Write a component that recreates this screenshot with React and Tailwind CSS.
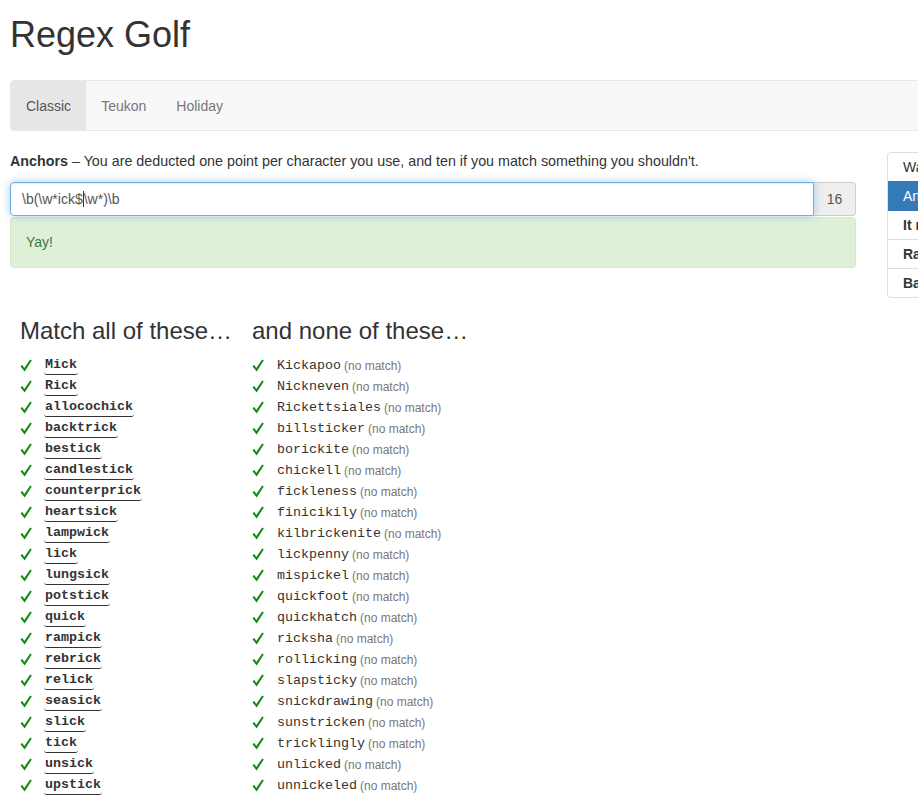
import React from "react";

const matches = ["Mick","Rick","allocochick","backtrick","bestick","candlestick","counterprick","heartsick","lampwick","lick","lungsick","potstick","quick","rampick","rebrick","relick","seasick","slick","tick","unsick","upstick"];
const nons = ["Kickapoo","Nickneven","Rickettsiales","billsticker","borickite","chickell","fickleness","finicikily","kilbrickenite","lickpenny","mispickel","quickfoot","quickhatch","ricksha","rollicking","slapsticky","snickdrawing","sunstricken","tricklingly","unlicked","unnickeled"];

function Check() {
  return (
    <svg width="12" height="13" viewBox="0 0 12 13" className="shrink-0">
      <path d="M0.4 7.2 L2.3 5.9 L4.3 8.9 L10.2 0.4 L11.8 1.5 L4.7 12.4 Z" fill="#138a13" />
    </svg>
  );
}

const sans = { fontFamily: '"Liberation Sans", Arial, sans-serif' };
const mono = { fontFamily: '"Liberation Mono", "Courier New", monospace' };

export default function App() {
  return (
    <div className="w-[918px] h-[801px] overflow-hidden bg-white text-[#333] text-[14px] leading-[20px]" style={sans}>
      <div className="w-[1180px] px-[10px]">
        <h1 className="text-[36px] leading-[40px] font-normal pt-[15px] pb-[25px]">Regex Golf</h1>
        <div className="flex h-[51px] border border-[#e7e7e7] bg-[#f8f8f8] rounded-[4px] overflow-hidden">
          <div className="px-[15px] py-[15px] bg-[#e7e7e7] text-[#555]">Classic</div>
          <div className="px-[15px] py-[15px] text-[#777]">Teukon</div>
          <div className="px-[15px] py-[15px] text-[#777]">Holiday</div>
        </div>
        <div className="flex mt-[20px] gap-[31px]">
          <div className="w-[846px] shrink-0">
            <p className="mb-[11px] text-[14.3px]"><b>Anchors</b> – You are deducted one point per character you use, and ten if you match something you shouldn't.</p>
            <div className="flex h-[34px]">
              <div className="flex-1 flex items-center px-[11px] border border-[#66afe9] rounded-l-[4px] text-[#555] shadow-[inset_0_1px_1px_rgba(0,0,0,0.075),0_0_8px_rgba(102,175,233,0.6)] relative z-10">
                <span>{"\\b(\\w*ick$"}</span>
                <span className="inline-block w-px h-[16px] bg-[#333]"></span>
                <span>{"\\w*)\\b"}</span>
              </div>
              <div className="w-[42px] flex items-center justify-center bg-[#eee] border border-l-0 border-[#ccc] rounded-r-[4px] text-[#555]">16</div>
            </div>
            <div className="mt-[1px] h-[51px] px-[15px] py-[14px] bg-[#dff0d8] border border-[#d6e9c6] rounded-[4px] text-[#3c763d]">Yay!</div>
            <div className="flex mt-[50px] pl-[10px]">
              <div className="w-[232px] shrink-0">
                <h3 className="text-[24px] leading-[26px] font-normal mb-[11px]">Match all of these…</h3>
                <ul>
                  {matches.map((w) => (
                    <li key={w} className="flex items-center h-[21px]">
                      <span className="w-[25px] flex"><Check /></span>
                      <span className="font-bold text-[13.33px] leading-[16px] border-b border-[#333] rounded-b-[3px] px-px -ml-px pb-px" style={mono}>{w}</span>
                    </li>
                  ))}
                </ul>
              </div>
              <div>
                <h3 className="text-[24px] leading-[26px] font-normal mb-[11px]">and none of these…</h3>
                <ul>
                  {nons.map((w) => (
                    <li key={w} className="flex items-center h-[21px]">
                      <span className="w-[25px] flex"><Check /></span>
                      <span className="text-[13.33px]" style={mono}>{w}</span>
                      <span className="text-[12px] text-[#777] ml-[3px]">(no match)</span>
                    </li>
                  ))}
                </ul>
              </div>
            </div>
          </div>
          <div className="w-[262px] shrink-0 pt-[1px]">
            <div className="border border-[#ddd] rounded-[4px] overflow-hidden">
              <div className="px-[15px] py-[4px] leading-[20px]">Warmup</div>
              <div className="px-[15px] py-[5px] leading-[20px] bg-[#337ab7] text-white">Anchors</div>
              <div className="px-[15px] py-[4px] leading-[20px] font-bold border-b border-[#ddd]">It never ends</div>
              <div className="px-[15px] py-[4px] leading-[20px] font-bold border-b border-[#ddd]">Ranges</div>
              <div className="px-[15px] py-[4px] leading-[20px] font-bold">Backrefs</div>
            </div>
          </div>
        </div>
      </div>
    </div>
  );
}
